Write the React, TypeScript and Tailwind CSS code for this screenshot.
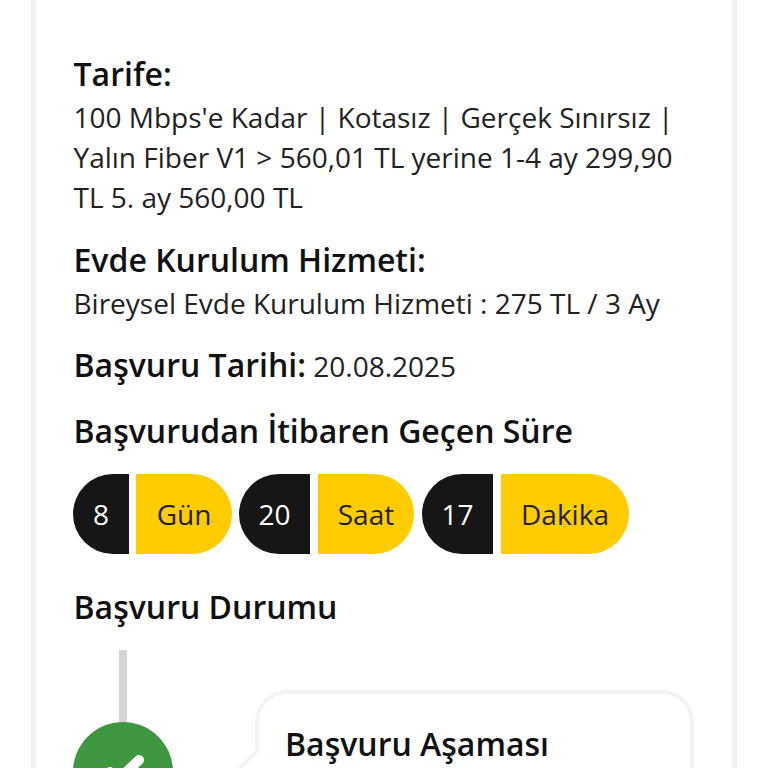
export default function App() {
  const pills = [
    { n: "8", u: "Gün", nw: "w-[56px]", uw: "w-[96px]", gap: "gap-[7px]", mr: "mr-[7px]" },
    { n: "20", u: "Saat", nw: "w-[71px]", uw: "w-[96px]", gap: "gap-[8px]", mr: "mr-[8px]" },
    { n: "17", u: "Dakika", nw: "w-[71px]", uw: "w-[128px]", gap: "gap-[8px]", mr: "mr-0" },
  ];
  return (
    <div className="h-[768px] w-[768px] overflow-hidden bg-white font-['Open_Sans',sans-serif] text-[#111111]">
      <div className="mx-[31px] h-[1000px] border-x-[5px] border-[#f0f0f0] pl-[37.5px] pr-[38px] pt-[54px]">
        <h2 className="text-[32px] font-semibold leading-[40px]">Tarife:</h2>
        <p className="mt-[3px] w-[620px] text-[28px] leading-[40px] text-[#222222]">
          100 Mbps'e Kadar | Kotasız | Gerçek Sınırsız | Yalın Fiber V1 &gt; 560,01 TL yerine 1-4 ay 299,90 TL 5. ay 560,00 TL
        </p>
        <h2 className="mt-[23px] text-[32px] font-semibold leading-[40px]">Evde Kurulum Hizmeti:</h2>
        <p className="mt-[3px] text-[28px] leading-[40px] text-[#222222]">Bireysel Evde Kurulum Hizmeti : 275 TL / 3 Ay</p>
        <p className="mt-[22px] leading-[40px]">
          <span className="text-[32px] font-semibold">Başvuru Tarihi:</span>
          <span className="text-[28px] text-[#222222]"> 20.08.2025</span>
        </p>
        <h2 className="mt-[20px] text-[32px] font-semibold leading-[40px]">Başvurudan İtibaren Geçen Süre</h2>
        <div className="-ml-[0.5px] mt-[23px] flex">
          {pills.map((p) => (
            <div key={p.u} className={`flex shrink-0 ${p.gap} ${p.mr}`}>
              <div className={`${p.nw} flex h-[80px] items-center justify-center rounded-l-[40px] bg-[#161616] text-[28px] text-white`}>{p.n}</div>
              <div className={`${p.uw} flex h-[80px] items-center justify-center rounded-r-[40px] bg-[#ffcc00] text-[28px] text-[#222222]`}>{p.u}</div>
            </div>
          ))}
        </div>
        <h2 className="mt-[33px] text-[32px] font-semibold leading-[40px]">Başvuru Durumu</h2>
        <div className="-ml-[0.5px] mt-[23px] flex">
          <div className="flex w-[100px] shrink-0 flex-col items-center">
            <div className="h-[72px] w-[8px] bg-[#d4d4d4]" />
            <div className="flex h-[100px] w-[100px] items-center justify-center rounded-full bg-[#3f9640]">
              <svg viewBox="0 0 100 100" className="h-[100px] w-[100px]" fill="none" stroke="white" strokeWidth="10" strokeLinecap="round">
                <path d="M37 50 L45 58 L66 38" />
              </svg>
            </div>
          </div>
          <div className="relative ml-[82px] mt-[40px] h-[300px] w-[439px] shrink-0 rounded-[32px] border-[4px] border-[#f3f3f3] px-[26px] pt-[30px]">
            <div className="absolute left-[-22px] top-[62px] h-[40px] w-[40px] rotate-45 border-b-[4px] border-l-[4px] border-[#f3f3f3] bg-white" />
            <h3 className="relative text-[32px] font-semibold leading-[40px]">Başvuru Aşaması</h3>
          </div>
        </div>
      </div>
    </div>
  );
}
